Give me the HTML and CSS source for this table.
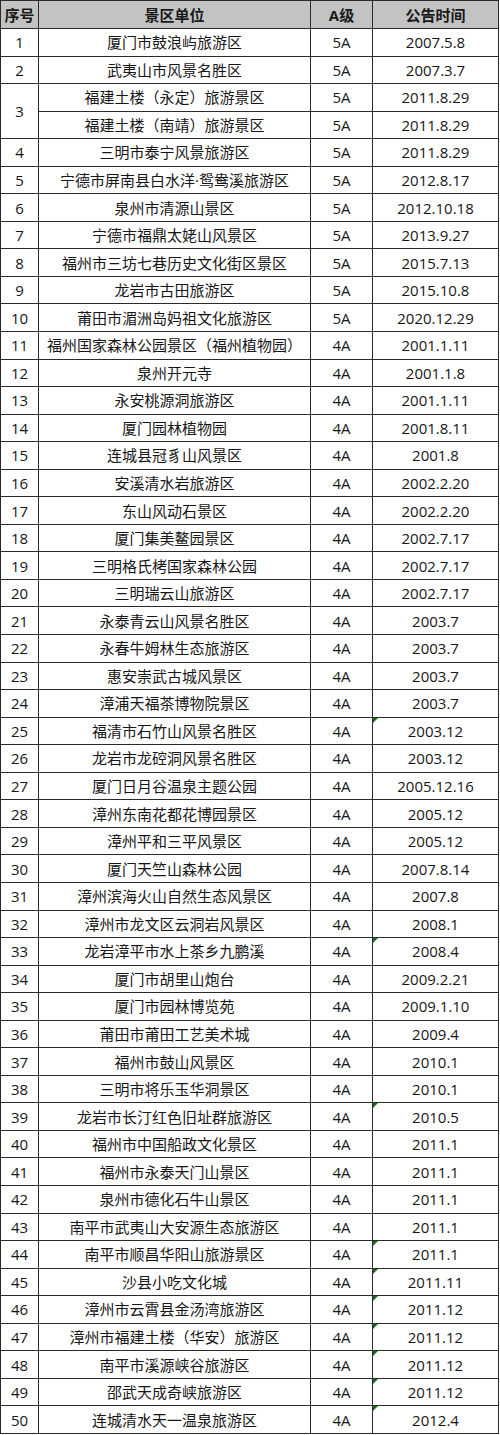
FILE: index.html
```html
<!DOCTYPE html>
<html lang="zh">
<head>
<meta charset="utf-8">
<link rel="stylesheet" href="styles.css">
</head>
<body>
<table class="sheet">
<colgroup><col class="c-no"><col class="c-name"><col class="c-lv"><col class="c-date"></colgroup>
<thead>
<tr class="head"><th>序号</th><th>景区单位</th><th>A级</th><th>公告时间</th></tr>
</thead>
<tbody>
<tr><td>1</td><td>厦门市鼓浪屿旅游区</td><td>5A</td><td>2007.5.8</td></tr>
<tr><td>2</td><td>武夷山市风景名胜区</td><td>5A</td><td>2007.3.7</td></tr>
<tr><td rowspan="2">3</td><td>福建土楼（永定）旅游景区</td><td>5A</td><td>2011.8.29</td></tr>
<tr><td>福建土楼（南靖）旅游景区</td><td>5A</td><td>2011.8.29</td></tr>
<tr><td>4</td><td>三明市泰宁风景旅游区</td><td>5A</td><td>2011.8.29</td></tr>
<tr><td>5</td><td>宁德市屏南县白水洋·鸳鸯溪旅游区</td><td>5A</td><td>2012.8.17</td></tr>
<tr><td>6</td><td>泉州市清源山景区</td><td>5A</td><td>2012.10.18</td></tr>
<tr><td>7</td><td>宁德市福鼎太姥山风景区</td><td>5A</td><td>2013.9.27</td></tr>
<tr><td>8</td><td>福州市三坊七巷历史文化街区景区</td><td>5A</td><td>2015.7.13</td></tr>
<tr><td>9</td><td>龙岩市古田旅游区</td><td>5A</td><td>2015.10.8</td></tr>
<tr><td>10</td><td>莆田市湄洲岛妈祖文化旅游区</td><td>5A</td><td>2020.12.29</td></tr>
<tr><td>11</td><td>福州国家森林公园景区（福州植物园）</td><td>4A</td><td>2001.1.11</td></tr>
<tr><td>12</td><td>泉州开元寺</td><td>4A</td><td>2001.1.8</td></tr>
<tr><td>13</td><td>永安桃源洞旅游区</td><td>4A</td><td>2001.1.11</td></tr>
<tr><td>14</td><td>厦门园林植物园</td><td>4A</td><td>2001.8.11</td></tr>
<tr><td>15</td><td>连城县冠豸山风景区</td><td>4A</td><td>2001.8</td></tr>
<tr><td>16</td><td>安溪清水岩旅游区</td><td>4A</td><td>2002.2.20</td></tr>
<tr><td>17</td><td>东山风动石景区</td><td>4A</td><td>2002.2.20</td></tr>
<tr><td>18</td><td>厦门集美鳌园景区</td><td>4A</td><td>2002.7.17</td></tr>
<tr><td>19</td><td>三明格氏栲国家森林公园</td><td>4A</td><td>2002.7.17</td></tr>
<tr><td>20</td><td>三明瑞云山旅游区</td><td>4A</td><td>2002.7.17</td></tr>
<tr><td>21</td><td>永泰青云山风景名胜区</td><td>4A</td><td>2003.7</td></tr>
<tr><td>22</td><td>永春牛姆林生态旅游区</td><td>4A</td><td>2003.7</td></tr>
<tr><td>23</td><td>惠安崇武古城风景区</td><td>4A</td><td>2003.7</td></tr>
<tr><td>24</td><td>漳浦天福茶博物院景区</td><td>4A</td><td>2003.7</td></tr>
<tr><td>25</td><td>福清市石竹山风景名胜区</td><td>4A</td><td class="flag">2003.12</td></tr>
<tr><td>26</td><td>龙岩市龙硿洞风景名胜区</td><td>4A</td><td>2003.12</td></tr>
<tr><td>27</td><td>厦门日月谷温泉主题公园</td><td>4A</td><td>2005.12.16</td></tr>
<tr><td>28</td><td>漳州东南花都花博园景区</td><td>4A</td><td>2005.12</td></tr>
<tr><td>29</td><td>漳州平和三平风景区</td><td>4A</td><td>2005.12</td></tr>
<tr><td>30</td><td>厦门天竺山森林公园</td><td>4A</td><td>2007.8.14</td></tr>
<tr><td>31</td><td>漳州滨海火山自然生态风景区</td><td>4A</td><td>2007.8</td></tr>
<tr><td>32</td><td>漳州市龙文区云洞岩风景区</td><td>4A</td><td>2008.1</td></tr>
<tr><td>33</td><td>龙岩漳平市水上茶乡九鹏溪</td><td>4A</td><td class="flag">2008.4</td></tr>
<tr><td>34</td><td>厦门市胡里山炮台</td><td>4A</td><td>2009.2.21</td></tr>
<tr><td>35</td><td>厦门市园林博览苑</td><td>4A</td><td>2009.1.10</td></tr>
<tr><td>36</td><td>莆田市莆田工艺美术城</td><td>4A</td><td>2009.4</td></tr>
<tr><td>37</td><td>福州市鼓山风景区</td><td>4A</td><td>2010.1</td></tr>
<tr><td>38</td><td>三明市将乐玉华洞景区</td><td>4A</td><td>2010.1</td></tr>
<tr><td>39</td><td>龙岩市长汀红色旧址群旅游区</td><td>4A</td><td class="flag">2010.5</td></tr>
<tr><td>40</td><td>福州市中国船政文化景区</td><td>4A</td><td>2011.1</td></tr>
<tr><td>41</td><td>福州市永泰天门山景区</td><td>4A</td><td>2011.1</td></tr>
<tr><td>42</td><td>泉州市德化石牛山景区</td><td>4A</td><td>2011.1</td></tr>
<tr><td>43</td><td>南平市武夷山大安源生态旅游区</td><td>4A</td><td>2011.1</td></tr>
<tr><td>44</td><td>南平市顺昌华阳山旅游景区</td><td>4A</td><td class="flag">2011.1</td></tr>
<tr><td>45</td><td>沙县小吃文化城</td><td>4A</td><td class="flag">2011.11</td></tr>
<tr><td>46</td><td>漳州市云霄县金汤湾旅游区</td><td>4A</td><td class="flag">2011.12</td></tr>
<tr><td>47</td><td>漳州市福建土楼（华安）旅游区</td><td>4A</td><td class="flag">2011.12</td></tr>
<tr><td>48</td><td>南平市溪源峡谷旅游区</td><td>4A</td><td class="flag">2011.12</td></tr>
<tr><td>49</td><td>邵武天成奇峡旅游区</td><td>4A</td><td class="flag">2011.12</td></tr>
<tr><td>50</td><td>连城清水天一温泉旅游区</td><td>4A</td><td class="flag">2012.4</td></tr>
</tbody>
</table>
</body>
</html>
```

FILE: styles.css
```css
html, body {
  margin: 0;
  padding: 0;
  background: #ffffff;
}

.sheet {
  border-collapse: collapse;
  table-layout: fixed;
  width: 498px;
  font-family: "Open Sans", "Noto Sans CJK SC", sans-serif;
  font-size: 15px;
  color: #161616;
}

.c-no { width: 38px; }
.c-name { width: 272px; }
.c-lv { width: 62px; }
.c-date { width: 126px; }

.sheet th,
.sheet td {
  border: 1px solid #2a2a2a;
  padding: 0;
  text-align: center;
  vertical-align: middle;
  line-height: 18px;
  white-space: nowrap;
  overflow: hidden;
}

.head {
  height: 28px;
}

.head th {
  background: #c3c3c3;
  font-weight: 700;
  color: #1a1a1a;
}

.sheet tbody tr {
  height: 27.55px;
}

.flag {
  position: relative;
}

.flag::before {
  content: "";
  position: absolute;
  left: 0;
  top: 0;
  width: 0;
  height: 0;
  border-top: 5px solid #1e6b1e;
  border-right: 5px solid transparent;
}
```
